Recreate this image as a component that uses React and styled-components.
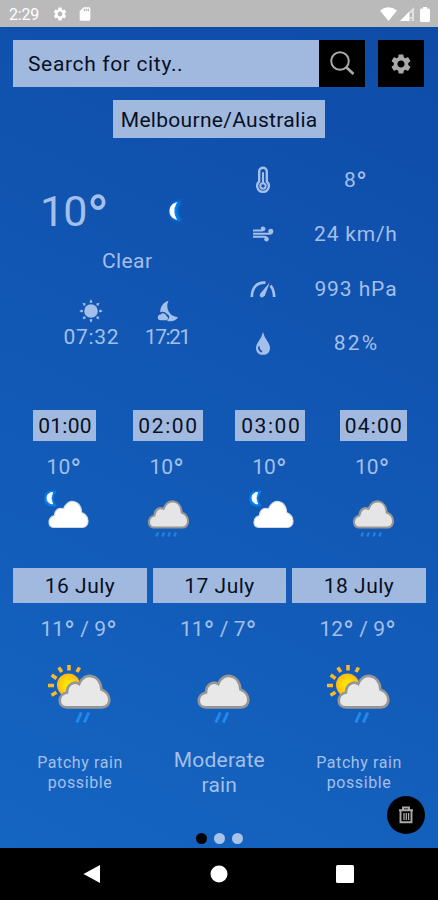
import React from "react";
import styled, { createGlobalStyle } from "styled-components";
import { MdSettings, MdSdCard } from "react-icons/md";

const GlobalStyle = createGlobalStyle`
  * {
    box-sizing: border-box;
  }
  body {
    margin: 0;
    font-family: Roboto, "Liberation Sans", sans-serif;
  }
`;

const Screen = styled.div`
  display: flex;
  flex-direction: column;
  width: 438px;
  height: 900px;
  overflow: hidden;
  color: #a4bfe9;
  background: linear-gradient(205deg, #0e4ba7, #1566c3);
`;

const StatusBar = styled.div`
  display: flex;
  align-items: center;
  flex: none;
  height: 27px;
  padding: 1px 8px 0 9px;
  color: #fff;
  background: #bababa;
`;

const Clock = styled.span`
  width: 43px;
  font-size: 16px;
  letter-spacing: -0.2px;
`;

const StatusIcons = styled.div`
  display: flex;
  align-items: center;
  gap: ${props => props.$gap}px;
  margin-left: ${props => (props.$end ? "auto" : "0")};
`;

const Main = styled.main`
  position: relative;
  display: flex;
  flex-direction: column;
  flex: none;
  height: 821px;
  padding: 13px 13px 0;
`;

const SearchRow = styled.div`
  display: flex;
  height: 47px;
`;

const SearchInput = styled.div`
  display: flex;
  align-items: center;
  width: 306px;
  padding: 1px 0 0 15px;
  color: #07101f;
  background: #a2b9df;
`;

const SquareButton = styled.button`
  display: flex;
  align-items: center;
  justify-content: center;
  width: 46px;
  height: 47px;
  margin: 0 0 0 ${props => props.$gap || 0}px;
  padding: 0;
  border: 0;
  color: #a9a9a9;
  background: #000;
`;

const Text = styled.span`
  font-size: ${props => props.$size || 21}px;
  line-height: ${props => props.$line || 24}px;
  letter-spacing: ${props => props.$track || 0}px;
  margin-right: ${props => -(props.$track || 0)}px;
  white-space: nowrap;
`;

const DegreeSign = styled.span`
  font-size: 1.4em;
  line-height: 0;
  vertical-align: -0.22em;
  letter-spacing: 0;
`;

const Tag = styled.div`
  display: flex;
  align-items: center;
  justify-content: center;
  align-self: center;
  width: ${props => props.$width}px;
  height: ${props => props.$height}px;
  color: #07101f;
  background: #a2b9df;
`;

const CityTag = styled(Tag)`
  margin-top: 13px;
  padding-top: 2px;
`;

const Current = styled.section`
  display: grid;
  grid-template-columns: 206px 206px;
  height: 217px;
  margin-top: 15px;
`;

const Summary = styled.div`
  display: flex;
  flex-direction: column;
  padding-top: 29px;
`;

const TempRow = styled.div`
  display: flex;
  align-items: center;
  justify-content: space-between;
  height: 57px;
  padding: 0 31px 0 27px;
`;

const Condition = styled.div`
  display: flex;
  justify-content: center;
  padding: 10px 0 0 22px;
`;

const SunTimes = styled.div`
  display: flex;
  gap: 26px;
  margin: 26px 0 0 50px;
`;

const SunTime = styled.div`
  display: flex;
  flex-direction: column;
  align-items: center;
  width: ${props => props.$width}px;
  gap: 2px;
`;

const Details = styled.div`
  display: grid;
  grid-template-rows: repeat(4, 54.3px);
`;

const Detail = styled.div`
  display: grid;
  grid-template-columns: 87px 99px;
  align-items: center;
  justify-items: center;
`;

const Hourly = styled.section`
  display: grid;
  grid-template-columns: repeat(4, 102.8px);
  margin: 40px 0 0 0.5px;
`;

const Column = styled.div`
  display: flex;
  flex-direction: column;
  align-items: center;
`;

const HourTemp = styled.div`
  height: 24px;
  margin: 14px 2px 6px 0;
`;

const Daily = styled.section`
  display: grid;
  grid-template-columns: repeat(3, 133.5px);
  column-gap: 6px;
  margin-top: 27px;
`;

const DayTemp = styled.div`
  height: 24px;
  margin: 14px 2px 12px 0;
`;

const Caption = styled.div`
  display: flex;
  flex-direction: column;
  align-items: center;
  justify-content: center;
  height: 50px;
  margin-top: 15px;
`;

const DeleteButton = styled.button`
  position: absolute;
  right: 13px;
  bottom: 14px;
  display: flex;
  align-items: center;
  justify-content: center;
  width: 38px;
  height: 38px;
  padding: 0;
  border: 0;
  border-radius: 50%;
  background: #000;
`;

const Dots = styled.div`
  display: flex;
  justify-content: center;
  gap: 7px;
  margin: auto 0 4px;
`;

const Dot = styled.span`
  width: 11px;
  height: 11px;
  border-radius: 50%;
  background: ${props => (props.$active ? "#000" : "#a8c3ea")};
`;

const NavBar = styled.nav`
  display: flex;
  flex: 1;
  align-items: center;
  justify-content: space-between;
  padding: 0 84px 0 83px;
  background: #000;
`;

const hours = [
  { time: "01:00", width: 63, track: 0.3, icon: "night" },
  { time: "02:00", width: 70, track: 1.6, icon: "drizzle" },
  { time: "03:00", width: 70, track: 1.6, icon: "night" },
  { time: "04:00", width: 67, track: 1.2, icon: "drizzle" }
];

const days = [
  {
    date: "16 July",
    high: "11",
    low: "9",
    icon: "sun",
    size: 16,
    line: 20.5,
    text: ["Patchy rain", "possible"],
    track: 0.6
  },
  {
    date: "17 July",
    high: "11",
    low: "7",
    icon: "cloud",
    size: 21,
    line: 25,
    text: ["Moderate", "rain"],
    track: 0.2
  },
  {
    date: "18 July",
    high: "12",
    low: "9",
    icon: "sun",
    size: 16,
    line: 20.5,
    text: ["Patchy rain", "possible"],
    track: 0.6
  }
];

function Degrees({ value }) {
  return (
    <>
      {value}
      <DegreeSign>°</DegreeSign>
    </>
  );
}

function WifiIcon() {
  return (
    <svg width="17" height="14" viewBox="0 0 17 14" fill="#fff">
      <path d="M0 3.500Q8.500-3 17 3.500L8.500 14Z" />
    </svg>
  );
}

function SignalIcon() {
  return (
    <svg width="14" height="14" viewBox="0 0 14 14">
      <path d="M14 0V14H0Z" fill="#e0e0e0" />
      <path d="M9 5V14H0Z" fill="#fff" />
      <path d="M11 6v4M11 12v1.500" stroke="#aaa" strokeWidth="1.600" />
    </svg>
  );
}

function BatteryIcon() {
  return (
    <svg width="10" height="15" viewBox="0 0 10 15" fill="#fff">
      <path d="M3 0h4v1.500h1.500Q10 1.500 10 3v10.500Q10 15 8.500 15h-7Q0 15 0 13.500V3Q0 1.500 1.500 1.500H3Z" />
    </svg>
  );
}

function SearchIcon() {
  return (
    <svg width="26" height="26" viewBox="0 0 26 26" fill="none" stroke="#a9a9a9">
      <circle cx="11" cy="10" r="8.800" strokeWidth="2" />
      <path d="M17.500 16.500l7 6.500" strokeWidth="2.800" />
    </svg>
  );
}

function MoonIcon() {
  return (
    <svg width="30" height="30" viewBox="0 0 30 30">
      <defs>
        <filter id="moonGlow" x="-60%" y="-60%" width="220%" height="220%">
          <feGaussianBlur stdDeviation="1.500" />
        </filter>
      </defs>
      <path
        d="M22 5.500A9.300 9.300 0 1 0 22 24.500Q15 15 22 5.500Z"
        fill="#0787f5"
        stroke="#0787f5"
        strokeWidth="1.500"
        filter="url(#moonGlow)"
      />
      <path d="M17.500 7.500A8 8 0 0 0 17.500 22.500Q13.500 15 17.500 7.500Z" fill="#fff" stroke="#fff" strokeWidth="1.600" />
    </svg>
  );
}

function SunriseIcon() {
  const angles = [0, 45, 90, 135, 180, 225, 270, 315];
  return (
    <svg width="24" height="24" viewBox="0 0 24 24" fill="#a4bfe9">
      <circle cx="12" cy="12" r="6.800" />
      {angles.map(angle => (
        <path
          key={angle}
          d="M10.500 3L12 .2l1.500 2.800Q12 4.900 10.500 3Z"
          transform={`rotate(${angle} 12 12)`}
        />
      ))}
    </svg>
  );
}

function SunsetIcon() {
  return (
    <svg width="24" height="24" viewBox="0 0 24 24" fill="#a4bfe9">
      <path d="M12.500 1.800C7 3.500 4 8 4.300 13.200Q8.500 12 11 15Q14.200 16.500 12.800 19.500L11 22Q19 23.500 22 18.200Q15.500 17.500 12.700 12.500T12.500 1.800Z" />
      <path d="M4.500 21.200Q1.800 21 1.800 18.400T4.800 15.500Q6 13.600 8.200 14.400T10.800 17.500Q12.500 18 12 19.700T9.800 21.200Z" />
    </svg>
  );
}

function ThermometerIcon() {
  return (
    <svg width="16" height="28" viewBox="0 0 16 28" fill="none" stroke="#a4bfe9">
      <path
        d="M4.200 15.500V5.500a3.800 3.800 0 0 1 7.600 0v10a5.900 5.900 0 1 1-7.600 0Z"
        strokeWidth="2.400"
      />
      <path d="M8 7v10" strokeWidth="2" strokeLinecap="round" />
      <circle cx="8" cy="20" r="2.700" strokeWidth="2" />
    </svg>
  );
}

function WindIcon() {
  return (
    <svg width="22" height="16" viewBox="0 0 22 16" fill="none" stroke="#a4bfe9">
      <path d="M1 4.500h8.500q3 0 3-2M1 7.700h16.500q2.500 0 2.500-2.500M1 10.800h10.500q3.500 0 4 2.200" strokeWidth="2" />
      <g fill="#a4bfe9" stroke="none">
        <circle cx="11" cy="2.600" r="2.200" />
        <circle cx="18.800" cy="5.300" r="2.500" />
        <circle cx="14.500" cy="13.300" r="2.200" />
      </g>
    </svg>
  );
}

function GaugeIcon() {
  return (
    <svg width="26" height="18" viewBox="0 0 26 18">
      <path
        d="M1.800 17C1.800 7.500 7.500 1.500 15.500 2.700M20.500 5.700Q24 9.800 24.200 17"
        fill="none"
        stroke="#a4bfe9"
        strokeWidth="2.700"
      />
      <path d="M19.800 2.200L10.400 13.500Q9 16.300 11 17.200T15 15.300Z" fill="#a4bfe9" />
    </svg>
  );
}

function DropIcon() {
  return (
    <svg width="16" height="25" viewBox="0 0 16 25">
      <path d="M8 1Q9 6 13 11.300C17 17 14.800 23.800 8 23.800S-1 17 3 11.300Q7 6 8 1Z" fill="#a4bfe9" />
      <path d="M4 15.500Q3.500 19.500 7 20.700" fill="none" stroke="#1353b0" strokeWidth="1.700" />
    </svg>
  );
}

function HourIcon({ night }) {
  return (
    <svg width="60" height="56" viewBox="0 0 60 56">
      {night && (
        <>
          <path
            d="M20.500 6.500Q10 5 10 13.500T20.500 20.500Q15 14 20.500 6.500Z"
            fill="#0787f5"
            stroke="#0787f5"
            strokeWidth="1.500"
            opacity=".8"
          />
          <path d="M17.500 7.500Q12 8 12 13T17.500 19Q14.500 13 17.500 7.500Z" fill="#fff" stroke="#fff" />
        </>
      )}
      <g transform={night ? "translate(2.500 -1)" : "translate(-.5 -1)"}>
        <path
          d="M16 43.500C8.500 43.500 8.500 33.500 16 31.500C16.500 25.500 21 23 25.500 24.800C30 13.500 43.500 15.500 44.500 28.500C53.500 32 53 43.500 45 43.500Z"
          transform="translate(1.500 0) scale(.96 1)"
          fill={night ? "#fff" : "#e5e5e7"}
          stroke={night ? "#d0d8e5" : "#969696"}
          strokeWidth={night ? 1.1 : 2.2}
        />
        {!night && (
          <path
            d="M18.800 52.500l1.700-4M24.800 52.500l1.700-4M30.800 52.500l1.700-4M36.800 52.500l1.700-4"
            stroke="#2284e2"
            strokeWidth="2.200"
          />
        )}
      </g>
    </svg>
  );
}

function DayIcon({ sunny }) {
  return (
    <svg width="80" height="80" viewBox="0 0 80 80">
      {sunny && (
        <>
          <defs>
            <radialGradient id="sunFill">
              <stop offset=".3" stopColor="#ffe600" />
              <stop offset="1" stopColor="#ffb61b" />
            </radialGradient>
          </defs>
          <circle cx="28.500" cy="32" r="11.500" fill="url(#sunFill)" />
          <path
            d="M29 17.500v-5.500M21.800 19l-3-4.500M37 19l2.500-4.500M16.500 25.500l-4.800-3.500M14 32.500H8M16.500 39.300l-5 3"
            stroke="#fdb827"
            strokeWidth="3.500"
          />
        </>
      )}
      <path
        d="M26 54.300C16 54.300 16 41.500 26 39.500C26 31.500 33.500 27.500 38.500 31C43 18.500 60.500 20.500 61.500 36.500C72 40 72.500 54.300 62 54.300Z"
        transform="translate(1.800 0) scale(.97 1)"
        fill="#e8e8e9"
        stroke="#969696"
        strokeWidth="2.700"
      />
      <path d="M36.800 69.500l4.500-10M44.300 69.500l4.500-10" stroke="#2089ee" strokeWidth="3" />
    </svg>
  );
}

function TrashIcon() {
  return (
    <svg width="16" height="18" viewBox="0 0 16 18" fill="none" stroke="#a9a9a9">
      <path d="M1 4.300h14M5 4V1.500h6V4M2.500 4.500v11.700h11V4.500" strokeWidth="1.900" />
      <path d="M6 7v7M8.300 7v7M10.600 7v7" strokeWidth="1.300" />
    </svg>
  );
}

function App() {
  return (
    <Screen>
      <GlobalStyle />
      <StatusBar>
        <Clock>2:29</Clock>
        <StatusIcons $gap={9}>
          <MdSettings size={16} />
          <MdSdCard size={16} />
        </StatusIcons>
        <StatusIcons $gap={3} $end>
          <WifiIcon />
          <SignalIcon />
          <span />
          <BatteryIcon />
        </StatusIcons>
      </StatusBar>
      <Main>
        <SearchRow>
          <SearchInput>
            <Text $track={0.65}>Search for city..</Text>
          </SearchInput>
          <SquareButton aria-label="Search">
            <SearchIcon />
          </SquareButton>
          <SquareButton aria-label="Settings" $gap={13}>
            <MdSettings size={24} />
          </SquareButton>
        </SearchRow>
        <CityTag $width={212} $height={38}>
          <Text $track={0.3}>Melbourne/Australia</Text>
        </CityTag>

        <Current>
          <Summary>
            <TempRow>
              <Text $size={43} $line={50} $track={-0.8}>
                <Degrees value="10" />
              </Text>
              <MoonIcon />
            </TempRow>
            <Condition>
              <Text $track={0.4}>Clear</Text>
            </Condition>
            <SunTimes>
              <SunTime $width={56}>
                <SunriseIcon />
                <Text $track={0.7}>07:32</Text>
              </SunTime>
              <SunTime $width={46}>
                <SunsetIcon />
                <Text $track={-1.5}>17:21</Text>
              </SunTime>
            </SunTimes>
          </Summary>
          <Details>
            <Detail>
              <ThermometerIcon />
              <Text>
                <Degrees value="8" />
              </Text>
            </Detail>
            <Detail>
              <WindIcon />
              <Text $track={0.8}>24 km/h</Text>
            </Detail>
            <Detail>
              <GaugeIcon />
              <Text $track={0.9}>993 hPa</Text>
            </Detail>
            <Detail>
              <DropIcon />
              <Text $track={2.2}>82%</Text>
            </Detail>
          </Details>
        </Current>

        <Hourly>
          {hours.map(hour => (
            <Column key={hour.time}>
              <Tag $width={hour.width} $height={31}>
                <Text $track={hour.track}>{hour.time}</Text>
              </Tag>
              <HourTemp>
                <Text>
                  <Degrees value="10" />
                </Text>
              </HourTemp>
              <HourIcon night={hour.icon === "night"} />
            </Column>
          ))}
        </Hourly>

        <Daily>
          {days.map(day => (
            <Column key={day.date}>
              <Tag $width={133.5} $height={35}>
                <Text $track={0.5}>{day.date}</Text>
              </Tag>
              <DayTemp>
                <Text>
                  <Degrees value={day.high} /> / <Degrees value={day.low} />
                </Text>
              </DayTemp>
              <DayIcon sunny={day.icon === "sun"} />
              <Caption>
                {day.text.map(line => (
                  <Text key={line} $size={day.size} $line={day.line} $track={day.track}>
                    {line}
                  </Text>
                ))}
              </Caption>
            </Column>
          ))}
        </Daily>

        <Dots>
          <Dot $active />
          <Dot />
          <Dot />
        </Dots>
        <DeleteButton aria-label="Delete city">
          <TrashIcon />
        </DeleteButton>
      </Main>
      <NavBar>
        <svg width="18" height="18" viewBox="0 0 18 18" fill="#fff">
          <path d="M17 0v18L.5 9Z" />
        </svg>
        <svg width="18" height="18" viewBox="0 0 18 18" fill="#fff">
          <circle cx="9" cy="9" r="8.500" />
        </svg>
        <svg width="18" height="18" viewBox="0 0 18 18" fill="#fff">
          <rect width="18" height="18" rx="1.500" />
        </svg>
      </NavBar>
    </Screen>
  );
}

export default App;
